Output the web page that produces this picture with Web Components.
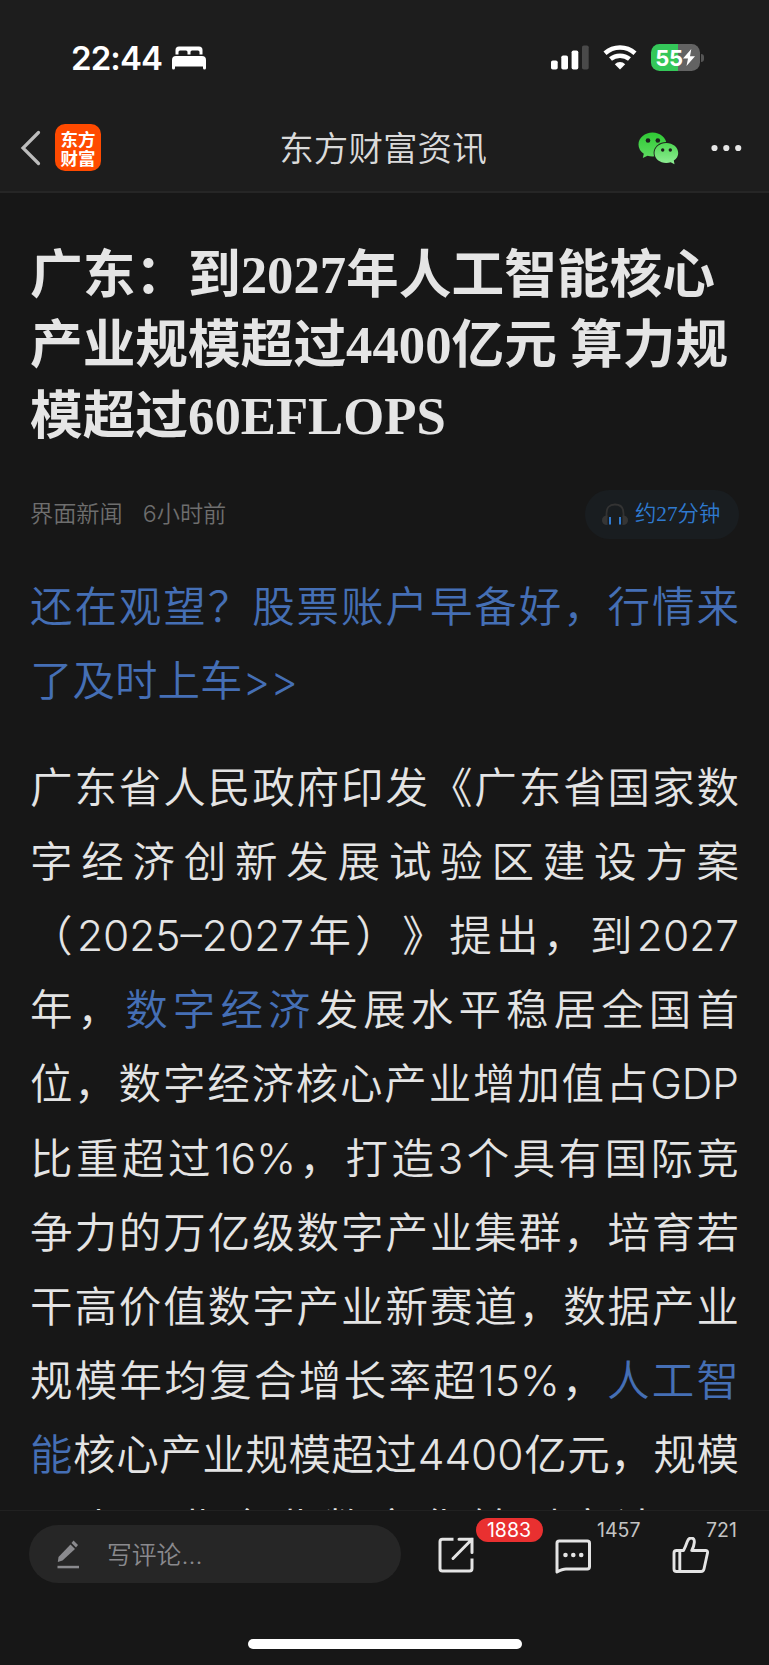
<!DOCTYPE html>
<html lang="zh-CN">
<head>
<meta charset="utf-8">
<title>东方财富资讯</title>
<style>
    body {
        margin: 0;
        background: #171717;
        font-family: Inter, "Noto Sans CJK SC", sans-serif;
        text-autospace: no-autospace;
        text-spacing-trim: space-all;
    }
</style>
</head>
<body>
    <news-page>
        <status-bar slot="top" time="22:44" battery="55"></status-bar>
        <nav-bar slot="top">东方财富资讯</nav-bar>

        <article-title>广东：到2027年人工智能核心产业规模超过4400亿元 算力规模超过60EFLOPS</article-title>
        <article-meta source="界面新闻" time="6小时前">
            <listen-button>约27分钟</listen-button>
        </article-meta>

        <text-block class="promo">
            <text-line>还在观望？股票账户早备好，行情来</text-line>
            <text-line last>了及时上车&gt;&gt;</text-line>
        </text-block>
        <text-block>
            <text-line>广东省人民政府印发《广东省国家数</text-line>
            <text-line>字经济创新发展试验区建设方案</text-line>
            <text-line>（2025–2027年）》提出，到2027</text-line>
            <text-line>年，<key-word>数字经济</key-word>发展水平稳居全国首</text-line>
            <text-line>位，数字经济核心产业增加值占GDP</text-line>
            <text-line>比重超过16%，打造3个具有国际竞</text-line>
            <text-line>争力的万亿级数字产业集群，培育若</text-line>
            <text-line>干高价值数字产业新赛道，数据产业</text-line>
            <text-line>规模年均复合增长率超15%，<key-word>人工智</key-word></text-line>
            <text-line><key-word>能</key-word>核心产业规模超过4400亿元，规模</text-line>
            <text-line short>以上工业企业数字化转型率达</text-line>
        </text-block>

        <comment-bar slot="bottom" placeholder="写评论...">
            <count-action count="1883" badge>
                <svg width="37" height="37" viewBox="0 0 37 37" fill="none" stroke="#e4e4e4" stroke-width="3">
                    <path d="M15.500 2.200H4.500Q2 2.200 2 4.700V31.500Q2 34 4.500 34H31.500Q34 34 34 31.500V21.500"/>
                    <path d="M21 2.200H34V15.500M34 2.200L15 21.500" stroke-linecap="round"/>
                </svg>
            </count-action>
            <count-action count="1457">
                <svg width="37" height="37" viewBox="0 0 37 37" fill="none" stroke="#e4e4e4" stroke-width="3" stroke-linejoin="round">
                    <path d="M2 35V6.200Q2 4 4.200 4H32.300Q34.500 4 34.500 6.200V29.800Q34.500 32 32.300 32H11Q7.500 32 2 35Z"/>
                    <g fill="#e4e4e4" stroke="none"><circle cx="10.500" cy="18" r="2.300"/><circle cx="18.300" cy="18" r="2.300"/><circle cx="26.200" cy="18" r="2.300"/></g>
                </svg>
            </count-action>
            <count-action count="721">
                <svg width="38" height="38" viewBox="0 0 38 38" fill="none" stroke="#e4e4e4" stroke-width="2.900" stroke-linejoin="round">
                    <path d="M8 13.500H11.500Q13.200 10.500 15.300 4.500Q16.500 1 19 1Q22.700 1 22.300 5.500Q22 9 19.800 13.500H33.500Q36 13.500 35.500 16L32 32Q31.500 34.500 29 34.500H4.500Q2 34.500 2 32V16Q2 13.500 4.500 13.500H8"/>
                    <path d="M7.800 13.500V34.500"/>
                </svg>
            </count-action>
        </comment-bar>
    </news-page>

<script>
    class BaseElement extends HTMLElement {
        connectedCallback() {
            if (this.shadowRoot) return
            this.attachShadow({mode: 'open'}).innerHTML = this.render()
        }
        attr(name) {
            return this.getAttribute(name) || ''
        }
    }

    class NewsPage extends BaseElement {
        render() {
            return `
            <style>
                :host { display: flex; flex-direction: column; height: 1665px; overflow: hidden; background: #171717; }
                .top { background: #1d1d1d; border-bottom: 2px solid #262626; height: 191px; flex: none; }
                main { flex: 1; min-height: 0; overflow: hidden; padding: 47px 30px 0; }
                .bottom { flex: none; }
            </style>
            <div class="top"><slot name="top"></slot></div>
            <main><slot></slot></main>
            <div class="bottom"><slot name="bottom"></slot></div>`
        }
    }

    class StatusBar extends BaseElement {
        render() {
            return `
            <style>
                :host { display: flex; align-items: center; height: 115px; padding: 0 65px 0 71px; box-sizing: border-box; color: #fff; }
                .time { font-size: 33px; font-weight: 600; letter-spacing: -0.900px; line-height: 40px; }
                .bed { margin-left: 10px; }
                .signal { margin-left: auto; }
                .wifi { margin-left: 13px; }
                .battery {
                    display: flex; align-items: center; justify-content: center; box-sizing: border-box;
                    margin-left: 14px; width: 49px; height: 27px; border-radius: 8.500px;
                    background: linear-gradient(90deg, #34c759 55%, #636363 55%);
                    font-size: 22px; font-weight: 700; letter-spacing: -0.400px;
                }
                .tip { width: 3px; height: 8px; margin-left: 1.500px; border-radius: 0 3px 3px 0; background: #555; }
            </style>
            <span class="time">${this.attr('time')}</span>
            <svg class="bed" width="34" height="24" viewBox="0 0 34 24" fill="#fff">
                <path d="M3.500 8.500V4Q3.500 .5 7 .5H27Q30.500 .5 30.500 4V8.500H27.500V6Q27.500 4.500 26 4.500H20Q18.500 4.500 18.500 6V8.500H15.500V6Q15.500 4.500 14 4.500H8Q6.500 4.500 6.500 6V8.500Z"/>
                <path d="M4 10H30Q34 10 34 14V22Q34 23.500 32.500 23.500T31 22V20.500H3V22Q3 23.500 1.500 23.500T0 22V14Q0 10 4 10Z"/>
            </svg>
            <svg class="signal" width="39" height="25" viewBox="0 0 39 25" fill="#fff">
                <rect x="0" y="15.500" width="6.700" height="9" rx="1.800"/>
                <rect x="10.300" y="10.500" width="6.700" height="14" rx="1.800"/>
                <rect x="20.600" y="5.500" width="6.700" height="19" rx="1.800"/>
                <rect x="31" y=".5" width="6.700" height="24" rx="1.800" fill="#4a4a4a"/>
            </svg>
            <svg class="wifi" width="34" height="25" viewBox="0 0 34 25" fill="none" stroke="#fff" stroke-width="4.600">
                <path d="M2 8.200Q8.500 2.500 17 2.500T32 8.200"/>
                <path d="M7.500 14Q11.500 10.700 17 10.700T26.500 14"/>
                <path d="M17 24.500L11.800 19.300Q14 17 17 17T22.200 19.300Z" fill="#fff" stroke="none"/>
            </svg>
            <span class="battery">${this.attr('battery')}<svg width="12" height="17" viewBox="0 0 12 17" fill="#fff"><path d="M8.300 0L0 9.500H5L3.500 17L12 7.300H7Z"/></svg></span>
            <span class="tip"></span>`
        }
    }

    class NavBar extends BaseElement {
        render() {
            return `
            <style>
                :host { display: grid; grid-template-columns: 1fr auto 1fr; align-items: center; height: 66px; padding: 0 27px 0 20px; color: #dadada; }
                .left, .right { display: flex; align-items: center; }
                .left { padding-bottom: 1px; }
                .right { justify-content: flex-end; gap: 32px; }
                .logo {
                    display: grid; grid-template-columns: 17.500px 17.500px; align-content: center; justify-content: center;
                    width: 46px; height: 47px; margin-left: 13px; border-radius: 10px; background: #ff4a00;
                    font: 700 17.500px/19px "Noto Sans CJK SC", sans-serif; color: #fff;
                }
                .title { padding-left: 4px; font-size: 34.600px; font-weight: 350; line-height: 50px; }
            </style>
            <div class="left">
                <svg width="22" height="36" viewBox="0 0 22 36" fill="none" stroke="#bcbcbc" stroke-width="3.200" stroke-linecap="round"><path d="M18.500 2.500L3 18L18.500 33.500"/></svg>
                <span class="logo"><span>东</span><span>方</span><span>财</span><span>富</span></span>
            </div>
            <span class="title"><slot></slot></span>
            <div class="right">
                <svg width="41" height="33" viewBox="0 0 41 33">
                    <defs>
                        <linearGradient id="a" x2="0" y2="1"><stop stop-color="#2fc934"/><stop offset="1" stop-color="#5fdc62"/></linearGradient>
                        <linearGradient id="b" x2="0" y2="1"><stop stop-color="#4fd653"/><stop offset="1" stop-color="#90ee95"/></linearGradient>
                    </defs>
                    <path fill="url(#a)" d="M14.500 .5C22 .5 28.500 5.500 28.500 12.500S22 24.500 14.500 24.500Q12 24.500 9.500 23.700L4.800 26L5.800 21.800Q.5 18 .5 12.500C.5 5.500 7 .5 14.500 .5Z"/>
                    <ellipse cx="28.300" cy="21" rx="12.700" ry="11" fill="#1d1d1d"/>
                    <path fill="url(#b)" d="M28.300 11C34.800 11 40.200 15.300 40.200 21Q40.200 25.500 35.800 28.500L36.500 32.200L32.700 30.300Q30.500 31 28.300 31C21.800 31 16.500 26.700 16.500 21S21.800 11 28.300 11Z"/>
                    <g fill="#1d1d1d"><circle cx="10" cy="8.500" r="2.300"/><circle cx="19.800" cy="8.500" r="2.300"/><circle cx="24.700" cy="18" r="1.700"/><circle cx="32.300" cy="18" r="1.700"/></g>
                </svg>
                <svg width="31" height="8" viewBox="0 0 31 8" fill="#e6e6e6"><circle cx="3.500" cy="4" r="3.100"/><circle cx="15.300" cy="4" r="3.100"/><circle cx="27.200" cy="4" r="3.100"/></svg>
            </div>`
        }
    }

    class ArticleTitle extends BaseElement {
        render() {
            return `
            <style>
                :host { display: block; font: 700 52.700px/70.400px "Liberation Serif", "Noto Sans CJK SC", serif; color: #e5e5e5; }
            </style>
            <slot></slot>`
        }
    }

    class ArticleMeta extends BaseElement {
        render() {
            return `
            <style>
                :host { display: flex; align-items: center; height: 49px; margin: 39px 0 30.500px; font-size: 23.200px; font-weight: 350; color: #6e6e6e; }
                span { padding-bottom: 5px; }
                .time { margin-left: 20px; }
                slot { display: block; margin-left: auto; }
            </style>
            <span>${this.attr('source')}</span>
            <span class="time">${this.attr('time')}</span>
            <slot></slot>`
        }
    }

    class ListenButton extends BaseElement {
        render() {
            return `
            <style>
                :host {
                    display: flex; align-items: center; gap: 7px; box-sizing: border-box; width: 154px; height: 49px; padding-left: 17px;
                    border-radius: 25px; background: #191d20; color: #2f7ad0;
                    font: 350 21.300px/30px "Liberation Serif", "Noto Sans CJK SC", serif;
                }
                svg { flex: none; }
                span { padding-bottom: 2px; white-space: nowrap; }
            </style>
            <svg width="26" height="23" viewBox="0 0 26 23" fill="none">
                <path d="M4.500 14V10.500Q4.500 1.500 13 1.500T21.500 10.500V14" stroke="#333" stroke-width="1.800"/>
                <path d="M5.500 12.500V22Q0 22 0 17.300T5.500 12.500ZM20.500 12.500V22Q26 22 26 17.300T20.500 12.500Z" fill="#353535"/>
                <path d="M8 14V21.500M18 14V21.500" stroke="#2f7ad0" stroke-width="2"/>
            </svg>
            <span><slot></slot></span>`
        }
    }

    class TextBlock extends BaseElement {
        render() {
            return `
            <style>
                :host { display: block; margin-bottom: 32.500px; font-size: 42.500px; font-weight: 350; line-height: 74.200px; color: #e4e4e4; }
                :host(.promo) { color: #456fb5; }
            </style>
            <slot></slot>`
        }
    }

    class TextLine extends BaseElement {
        render() {
            return `
            <style>
                :host { display: block; height: 74.200px; text-align: justify; text-align-last: justify; white-space: nowrap; }
                :host([last]) { text-align-last: left; }
                :host([short]) { padding-right: 81px; }
            </style>
            <slot></slot>`
        }
    }

    class KeyWord extends BaseElement {
        render() {
            return `<style>:host { display: inline; color: #456fb5; }</style><slot></slot>`
        }
    }

    class CommentBar extends BaseElement {
        render() {
            return `
            <style>
                :host { display: flex; flex-direction: column; height: 155px; box-sizing: border-box; border-top: 1px solid #212121; background: #171717; }
                .row { display: flex; align-items: flex-start; padding: 14px 0 0 29px; }
                .input {
                    display: flex; flex: none; align-items: center; box-sizing: border-box; width: 372px; height: 58px; padding-left: 28px;
                    border-radius: 29px; background: #262626; color: #8a8a8e; font-size: 24.800px; font-weight: 350;
                }
                .input span { margin-left: 27px; padding-bottom: 3px; }
                .actions { display: flex; flex: none; margin: 11.500px 0 0 37px; }
                .home { width: 274px; height: 10px; margin: 56px auto 0; border-radius: 5px; background: #fff; }
            </style>
            <div class="row">
                <div class="input">
                    <svg width="23" height="29" viewBox="0 0 23 29" fill="#8a8a8e">
                        <path d="M13.500 4.500L18 9L5.500 20.500L.8 22L1.500 17Z"/>
                        <path d="M16.500 .5L21 5L19 7.500L14.500 3Z"/>
                        <rect x=".5" y="25.800" width="21.500" height="2.500"/>
                    </svg>
                    <span>${this.attr('placeholder')}</span>
                </div>
                <div class="actions"><slot></slot></div>
            </div>
            <div class="home"></div>`
        }
    }

    class CountAction extends BaseElement {
        render() {
            return `
            <style>
                :host { display: block; position: relative; width: 117px; height: 38px; }
                .count { position: absolute; left: 42px; top: -19px; font-size: 19.500px; line-height: 24px; color: #c4c4c4; }
                :host([count="721"]) .count { left: 34px; }
                :host([badge]) .count {
                    left: 37.500px; width: 67px; height: 24px; border-radius: 12px; background: #e93030; color: #fff; text-align: center;
                }
            </style>
            <slot></slot>
            <span class="count">${this.attr('count')}</span>`
        }
    }

    customElements.define('news-page', NewsPage)
    customElements.define('status-bar', StatusBar)
    customElements.define('nav-bar', NavBar)
    customElements.define('article-title', ArticleTitle)
    customElements.define('article-meta', ArticleMeta)
    customElements.define('listen-button', ListenButton)
    customElements.define('text-block', TextBlock)
    customElements.define('text-line', TextLine)
    customElements.define('key-word', KeyWord)
    customElements.define('comment-bar', CommentBar)
    customElements.define('count-action', CountAction)
</script>
</body>
</html>
